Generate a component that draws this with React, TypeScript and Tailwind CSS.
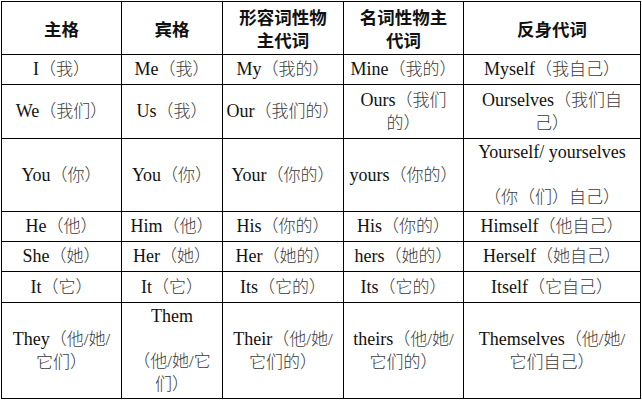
import type { ReactNode } from "react";

const GAP = "__gap__";

const header = [["主格"], ["宾格"], ["形容词性物", "主代词"], ["名词性物主", "代词"], ["反身代词"]];

const rows: string[][][] = [
  [["I（我）"], ["Me（我）"], ["My（我的）"], ["Mine（我的）"], ["Myself（我自己）"]],
  [["We（我们）"], ["Us（我）"], ["Our（我们的）"], ["Ours（我们", "的）"], ["Ourselves（我们自", "己）"]],
  [["You（你）"], ["You（你）"], ["Your（你的）"], ["yours（你的）"], ["Yourself/ yourselves", GAP, "（你（们）自己）"]],
  [["He（他）"], ["Him（他）"], ["His（你的）"], ["His（你的）"], ["Himself（他自己）"]],
  [["She（她）"], ["Her（她）"], ["Her（她的）"], ["hers（她的）"], ["Herself（她自己）"]],
  [["It（它）"], ["It（它）"], ["Its（它的）"], ["Its（它的）"], ["Itself（它自己）"]],
  [
    ["They（他/她/", "它们）"],
    ["Them", GAP, "（他/她/它", "们）"],
    ["Their（他/她/", "它们的）"],
    ["theirs（他/她/", "它们的）"],
    ["Themselves（他/她/", "它们自己）"],
  ],
];

// latin in black, chinese a bit lighter like the song face in the scan
function Line({ text }: { text: string }) {
  const parts = text.split(/([\u3000-\u9fff\uff00-\uffef/]+)/).filter(Boolean);
  const out: ReactNode[] = parts.map((p, i) =>
    /[\u3000-\u9fff\uff00-\uffef]/.test(p) ? (
      <span key={i} className="text-[17px] font-light text-[#3a3a3a]">
        {p}
      </span>
    ) : (
      <span key={i}>{p}</span>
    )
  );
  return <div className="whitespace-nowrap">{out}</div>;
}

function Cell({ lines }: { lines: string[] }) {
  return (
    <div className="flex flex-col items-center justify-center bg-white text-center leading-[23px]">
      {lines.map((l, i) => (l === GAP ? <div key={i} className="h-[22px]" /> : <Line key={i} text={l} />))}
    </div>
  );
}

export default function App() {
  return (
    <div className="h-[400px] w-[642px] bg-white pl-px pt-px font-['Liberation_Serif','Noto_Sans_CJK_SC',serif] text-[18px] text-[#111]">
      <div className="inline-grid grid-cols-[119px_100px_120px_119px_176px] grid-rows-[52px_29px_53px_72px_29px_29px_30px_95px] gap-px bg-black p-px">
        {header.map((h, i) => (
          <div
            key={i}
            className="flex flex-col items-center justify-center bg-white text-center font-['Noto_Sans_CJK_SC',sans-serif] text-[17.5px] font-bold leading-[23px]"
          >
            {h.map((l) => (
              <div key={l}>{l}</div>
            ))}
          </div>
        ))}
        {rows.map((r, ri) => r.map((c, ci) => <Cell key={`${ri}-${ci}`} lines={c} />))}
      </div>
    </div>
  );
}
